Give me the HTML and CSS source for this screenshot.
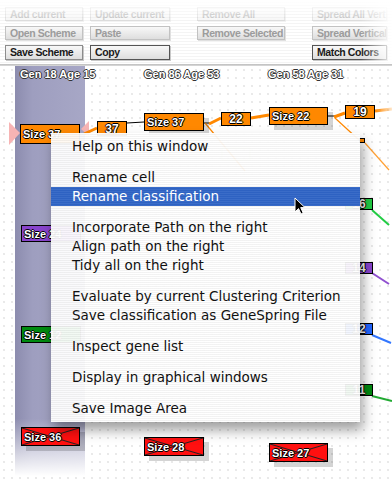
FILE: index.html
```html
<!DOCTYPE html>
<html lang="en">
<head>
  <meta charset="UTF-8" />
  <meta name="viewport" content="width=device-width, initial-scale=1.0"/>
  <title>Classification Window</title>
  <link rel="stylesheet" href="styles.css">
</head>
<body>
  <div class="page">
    <div class="toolbar">
      <div class="btn r1">Add current</div>
      <div class="btn r1 w80">Update current</div>
      <div class="btn r1 w88">Remove All</div>
      <div class="btn r1">Spread All Vert</div>

      <div class="btn r2">Open Scheme</div>
      <div class="btn r2 w80">Paste</div>
      <div class="btn r2 w88">Remove Selected</div>
      <div class="btn r2">Spread Vertical</div>

      <div class="btn r3">Save Scheme</div>
      <div class="btn r3 w80 dark">Copy</div>
      <div class="gap"></div>
      <div class="btn r3 dark">Match Colors</div>
    </div>
    <div class="rule"></div>

    <div class="canvas">
      <div class="band"></div>

      <div class="gen" style="left:20px">Gen 18 Age 15</div>
      <div class="gen" style="left:144px">Gen 86 Age 53</div>
      <div class="gen" style="left:268px">Gen 58 Age 31</div>

      <svg class="edges" width="392" height="414" viewBox="0 0 392 414">
        <defs>
          <linearGradient id="fadeR" x1="0" x2="1">
            <stop offset="0" stop-color="#ff8800"/>
            <stop offset="1" stop-color="#ff8800" stop-opacity="0.2"/>
          </linearGradient>
        </defs>
        <polygon points="9,56 20,67 9,79" fill="#f7b4b4"/>
        <polygon points="89,55 81,63 89,70" fill="#f7b4b4"/>
        <line x1="84" y1="68" x2="97" y2="62" stroke="#ff8800" stroke-width="3"/>
        <line x1="127" y1="57" x2="144" y2="56" stroke="#000" stroke-width="1"/>
        <line x1="204" y1="57" x2="210" y2="57" stroke="#000" stroke-width="1"/>
        <line x1="209" y1="58" x2="221" y2="52" stroke="#ff8800" stroke-width="3"/>
        <line x1="251" y1="52" x2="269" y2="49" stroke="#ff8800" stroke-width="3"/>
        <line x1="328" y1="50" x2="335" y2="50" stroke="#000" stroke-width="1"/>
        <line x1="334" y1="51" x2="345" y2="47" stroke="#ff8800" stroke-width="3"/>
        <line x1="375" y1="45" x2="392" y2="43" stroke="url(#fadeR)" stroke-width="3"/>
        <line x1="205" y1="57" x2="245" y2="105" stroke="#ff8800" stroke-width="1.2"/>
        <line x1="335" y1="52" x2="359" y2="74" stroke="#ff8800" stroke-width="1.2"/>
        <line x1="365" y1="77" x2="389" y2="104" stroke="#ff8800" stroke-width="1.2" stroke-opacity="0.8"/>
        <line x1="372" y1="144" x2="389" y2="159" stroke="#22cc44" stroke-width="2"/>
        <line x1="372" y1="207" x2="389" y2="218" stroke="#9050d0" stroke-width="2"/>
        <line x1="372" y1="269" x2="391" y2="277" stroke="#3377ff" stroke-width="2"/>
        <line x1="372" y1="330" x2="392" y2="335" stroke="#22aa33" stroke-width="2"/>
        <rect x="222" y="82" width="28" height="12" fill="none" stroke="#e6efc4"/>
        <rect x="232" y="120" width="60" height="14" fill="none" stroke="#e8e8f4"/>
      </svg>

      <div class="node orange big" style="left:20px;top:58px;width:60px;height:20px">Size 37</div>
      <div class="node orange num" style="left:97px;top:55px;width:30px;height:15px">37</div>
      <div class="node orange big shadow" style="left:144px;top:47px;width:60px;height:18px">Size 37</div>
      <div class="node orange num" style="left:221px;top:46px;width:30px;height:14px">22</div>
      <div class="node orange big shadow" style="left:269px;top:41px;width:59px;height:18px">Size 22</div>
      <div class="node orange num" style="left:345px;top:39px;width:30px;height:14px">19</div>
      <div class="node orange tiny" style="left:359px;top:72px;width:6px;height:5px"></div>

      <div class="node green num" style="left:345px;top:132px;width:28px;height:12px">16</div>
      <div class="node purple num" style="left:345px;top:196px;width:28px;height:12px">14</div>
      <div class="node blue num" style="left:345px;top:257px;width:28px;height:12px">12</div>
      <div class="node dgreen num" style="left:345px;top:318px;width:28px;height:12px">11</div>

      <div class="node purple big" style="left:21px;top:159px;width:60px;height:17px">Size 24</div>
      <div class="node dgreen big" style="left:21px;top:260px;width:60px;height:17px">Size 12</div>

      <div class="node red big shadow" style="left:21px;top:361px;width:59px;height:19px">Size 36</div>
      <div class="node red big shadow" style="left:144px;top:371px;width:60px;height:19px">Size 28</div>
      <div class="node red big shadow" style="left:269px;top:377px;width:59px;height:19px">Size 27</div>

      <div class="menu">
        <div class="item">Help on this window</div>
        <div class="sep"></div>
        <div class="item">Rename cell</div>
        <div class="item active">Rename classification</div>
        <div class="sep"></div>
        <div class="item">Incorporate Path on the right</div>
        <div class="item">Align path on the right</div>
        <div class="item">Tidy all on the right</div>
        <div class="sep"></div>
        <div class="item">Evaluate by current Clustering Criterion</div>
        <div class="item">Save classification as GeneSpring File</div>
        <div class="sep"></div>
        <div class="item">Inspect gene list</div>
        <div class="sep"></div>
        <div class="item">Display in graphical windows</div>
        <div class="sep"></div>
        <div class="item">Save Image Area</div>
      </div>

      <svg class="cursor" width="12" height="18" viewBox="0 0 12 18">
        <path d="M1 1 L1 15 L4.5 11.6 L7 17 L9.2 16 L6.7 10.6 L11 10.6 Z" fill="#000" stroke="#fff" stroke-width="1"/>
      </svg>
    </div>
  </div>
</body>
</html>
```

FILE: styles.css
```css
* {
  box-sizing: border-box;
}
body, html {
  margin: 0;
  padding: 0;
  overflow: hidden;
  background: #fff;
  font-family: "DejaVu Sans", sans-serif;
}
.page {
  width: 392px;
  height: 480px;
  overflow: hidden;
}

/* toolbar */
.toolbar {
  position: relative;
  height: 64px;
  padding: 7px 0 0 5px;
  display: grid;
  grid-template-columns: 78px 100px 108px 75px;
  grid-template-rows: 14px 14px 15px;
  column-gap: 7px;
  row-gap: 5px;
  overflow: hidden;
  background: repeating-linear-gradient(to bottom, #fff 0 2px, #f4f4f4 2px 3px);
}
.toolbar::after {
  content: "";
  position: absolute;
  top: 0;
  left: 0;
  right: 0;
  bottom: 0;
  background:
    linear-gradient(to right, rgba(255,255,255,0) 92%, rgba(255,255,255,0.9) 100%),
    linear-gradient(to bottom, #fff 0%, rgba(255,255,255,0) 30%);
  pointer-events: none;
}
.btn {
  height: 100%;
  padding: 0 4px;
  border: 1px solid #8c8c8c;
  background: linear-gradient(to bottom, #f8f8f8, #dedede);
  box-shadow: 1px 1px 0 #c8c8c8;
  font: bold 10.5px "Liberation Sans", Arial, sans-serif;
  letter-spacing: -0.4px;
  line-height: 12px;
  color: #1a1a1a;
  white-space: nowrap;
  overflow: hidden;
}
.w80 { width: 80px; }
.w88 { width: 88px; }
.r1 {
  opacity: 0.22;
}
.r2 {
  color: #9c9c9c;
  border-color: #c2c2c2;
  box-shadow: 1px 1px 0 #e0e0e0;
}
.r3 {
  line-height: 13px;
}
.dark {
  border-color: #555;
}
.rule {
  height: 2px;
  background: linear-gradient(to bottom, #bdbdbd, #dcdcdc);
}

/* canvas */
.canvas {
  position: relative;
  height: 414px;
  background-color: #fff;
  background-image: radial-gradient(circle, #e2e2e2 0.6px, transparent 1px);
  background-size: 8px 8px;
}
.band {
  position: absolute;
  left: 15px;
  top: 0;
  width: 70px;
  height: 410px;
  background:
    linear-gradient(to bottom, rgba(255,255,255,0) 86%, #fff 100%),
    linear-gradient(to right, #8c8cae, #9e9ebf 25%, #a7a7c6);
}
.gen {
  position: absolute;
  top: 2px;
  font: bold 11px "Liberation Sans", Arial, sans-serif;
  color: #fff;
  white-space: nowrap;
  text-shadow: -1px 0 #333, 1px 0 #333, 0 -1px #333, 0 1px #333;
}
.edges {
  position: absolute;
  left: 0;
  top: 0;
}
.node {
  position: absolute;
  border: 1px solid #000;
  font: bold 11px "Liberation Sans", Arial, sans-serif;
  color: #fff;
  white-space: nowrap;
  overflow: hidden;
  text-shadow: -1px 0 #000, 1px 0 #000, 0 -1px #000, 0 1px #000;
}
.big {
  padding-left: 2px;
  display: flex;
  align-items: center;
}
.num {
  display: flex;
  align-items: center;
  justify-content: center;
  font-size: 12px;
}
.shadow {
  box-shadow: 5px 5px 0 rgba(0,0,0,0.17);
}
.orange { background: #ff8800; }
.green { background: #22cc44; }
.dgreen { background: #008a10; }
.purple { background: #8844cc; }
.blue { background: #2266ff; }
.red {
  background:
    linear-gradient(to top right, transparent calc(50% - 1px), #222 50%, transparent calc(50% + 1px)),
    linear-gradient(to bottom right, transparent calc(50% - 1px), #222 50%, transparent calc(50% + 1px)),
    #ff1010;
}

/* popup menu */
.menu {
  position: absolute;
  left: 51px;
  top: 67px;
  width: 309px;
  padding: 4px 0;
  background: repeating-linear-gradient(to bottom, rgba(255,255,255,0.95) 0 1px, rgba(242,242,242,0.95) 1px 2px);
  box-shadow: 3px 8px 12px rgba(0,0,0,0.38);
  font-family: "DejaVu Sans", sans-serif;
  font-size: 13.5px;
  color: #111;
}
.item {
  height: 19px;
  line-height: 19px;
  padding-left: 21px;
  white-space: nowrap;
}
.item.active {
  background: repeating-linear-gradient(to bottom, #3a6cc8 0 1px, #2e62c2 1px 2px);
  color: #fff;
}
.sep {
  height: 12px;
}
.cursor {
  position: absolute;
  left: 294px;
  top: 131px;
}
```
